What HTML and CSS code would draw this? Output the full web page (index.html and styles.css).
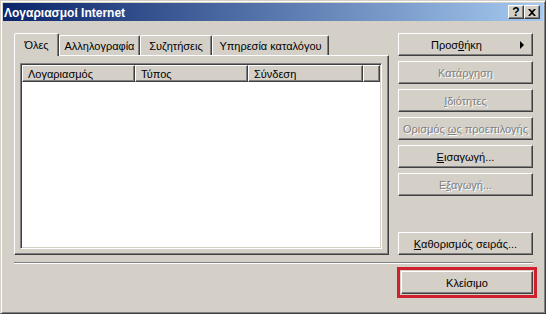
FILE: index.html
```html
<!DOCTYPE html>
<html lang="el">
<head>
<meta charset="utf-8">
<title>Λογαριασμοί Internet</title>
<link rel="stylesheet" href="styles.css">
</head>
<body>
<div class="window">
  <div class="titlebar">
    <span class="title">Λογαριασμοί Internet</span>
    <div class="caption-buttons">
      <div class="cap cap-help">?</div>
      <div class="cap cap-close">
        <svg width="8" height="7" viewBox="0 0 8 7"><path d="M0 0h2l2 2 2-2h2L5 3.5 8 7H6L4 5 2 7H0l3-3.5z" fill="#000"/></svg>
      </div>
    </div>
  </div>
  <div class="content">
    <div class="main">
      <div class="tabctl">
        <div class="tabrow">
          <div class="tab active tab-all">Όλες</div>
          <div class="tab tab-mail">Αλληλογραφία</div>
          <div class="tab tab-news">Συζητήσεις</div>
          <div class="tab tab-dir">Υπηρεσία καταλόγου</div>
        </div>
        <div class="panel">
          <div class="listview">
            <div class="lv-header">
              <div class="col col-account">Λογαριασμός</div>
              <div class="col col-type">Τύπος</div>
              <div class="col col-conn">Σύνδεση</div>
              <div class="col col-fill"></div>
            </div>
          </div>
        </div>
      </div>
      <div class="side">
        <button class="btn btn-add">Προσ<u>θ</u>ήκη<span class="arrow"></span></button>
        <button class="btn disabled">Κατάρ<u>γ</u>ηση</button>
        <button class="btn disabled"><u>Ι</u>διότητες</button>
        <button class="btn disabled">Ορισμός <u>ω</u>ς προεπιλογής</button>
        <button class="btn"><u>Ε</u>ισαγωγή...</button>
        <button class="btn disabled">Ε<u>ξ</u>αγωγή...</button>
        <button class="btn btn-order"><u>Κ</u>αθορισμός σειράς...</button>
      </div>
    </div>
    <div class="separator"></div>
    <div class="footer">
      <button class="btn btn-close">Κλείσιμο</button>
    </div>
  </div>
</div>
</body>
</html>
```
FILE: styles.css
```css
* { box-sizing: border-box; }
html, body { margin: 0; padding: 0; }
body {
  width: 546px;
  height: 314px;
  overflow: hidden;
  background: #d4d0c8;
  font-family: "Liberation Sans", Arial, sans-serif;
  font-size: 11px;
  color: #000;
}
.window {
  width: 546px;
  height: 314px;
  border: 1px solid;
  border-color: #d4d0c8 #404040 #404040 #d4d0c8;
  box-shadow: inset 1px 1px #fff, inset -1px -1px #808080;
  padding: 2px;
  display: flex;
  flex-direction: column;
  background: #d4d0c8;
}
.titlebar {
  height: 18px;
  flex: none;
  display: flex;
  align-items: center;
  justify-content: space-between;
  padding: 0 3px 0 1px;
  background: linear-gradient(to right, #0a246a, #a6caf0);
}
.title {
  color: #fff;
  font-weight: bold;
  font-size: 12px;
  padding-top: 1px;
}
.caption-buttons { display: flex; }
.cap {
  width: 16px;
  height: 14px;
  background: #d4d0c8;
  border: 1px solid;
  border-color: #fff #404040 #404040 #fff;
  box-shadow: inset -1px -1px #808080;
  display: flex;
  align-items: center;
  justify-content: center;
}
.cap-help {
  font-weight: bold;
  font-size: 12px;
  line-height: 1;
  padding-bottom: 1px;
}
.cap-close svg { display: block; margin-left: -1px; }

.content {
  flex: 1;
  display: flex;
  flex-direction: column;
  padding: 12px 10px 0 11px;
}
.main {
  display: flex;
  height: 222px;
  gap: 9px;
}
.tabctl {
  width: 375px;
  display: flex;
  flex-direction: column;
}
.tabrow {
  height: 22px;
  display: flex;
  align-items: flex-end;
}
.tab {
  height: 20px;
  border: 1px solid;
  border-bottom: none;
  border-color: #fff #404040 transparent #fff;
  border-radius: 2px 2px 0 0;
  box-shadow: inset -1px 0 #808080;
  background: #d4d0c8;
  display: flex;
  align-items: center;
  justify-content: center;
  padding-top: 1px;
  white-space: nowrap;
}
.tab.active {
  height: 23px;
  margin-bottom: -1px;
  position: relative;
  z-index: 1;
  padding-top: 0;
  padding-bottom: 1px;
}
.tab-all { width: 45px; }
.tab-mail { width: 81px; }
.tab-news { width: 72px; }
.tab-dir { width: 117px; }

.panel {
  flex: 1;
  display: flex;
  border: 1px solid;
  border-color: #fff #404040 #404040 #fff;
  box-shadow: inset -1px -1px #808080;
  padding: 7px 6px 5px 5px;
}
.listview {
  flex: 1;
  background: #fff;
  border: 1px solid;
  border-color: #808080 #fff #fff #808080;
  box-shadow: inset 1px 1px #404040, inset -1px -1px #d4d0c8;
  padding: 1px;
}
.lv-header {
  display: flex;
  height: 17px;
}
.col {
  background: #d4d0c8;
  border: 1px solid;
  border-color: #fff #404040 #404040 #fff;
  box-shadow: inset -1px -1px #808080;
  padding-left: 5px;
  display: flex;
  align-items: center;
  white-space: nowrap;
}
.col-account { width: 113px; }
.col-type { width: 113px; }
.col-conn { width: 115px; }
.col-fill { flex: 1; }

.side {
  width: 135px;
  display: flex;
  flex-direction: column;
  gap: 5px;
}
.btn {
  height: 23px;
  flex: none;
  background: #d4d0c8;
  border: 1px solid;
  border-color: #fff #404040 #404040 #fff;
  box-shadow: inset -1px -1px #808080;
  font-family: "Liberation Sans", Arial, sans-serif;
  font-size: 11px;
  color: #000;
  padding: 0;
  text-align: center;
  white-space: nowrap;
}
.btn u { text-underline-offset: 1px; }
.btn.disabled {
  color: #808080;
  text-shadow: 1px 1px 0 #fff;
}
.btn-add {
  position: relative;
  padding-right: 18px;
}
.arrow {
  position: absolute;
  right: 8px;
  top: 7px;
  width: 0;
  height: 0;
  border-top: 4px solid transparent;
  border-bottom: 4px solid transparent;
  border-left: 4px solid #000;
}
.btn-order { margin-top: auto; }

.separator {
  margin-top: 7px;
  height: 2px;
  border-top: 1px solid #808080;
  border-bottom: 1px solid #fff;
}
.footer {
  display: flex;
  justify-content: flex-end;
  margin-top: 7px;
}
.btn-close {
  width: 132px;
  outline: 3px solid #d0202e;
  outline-offset: 1px;
}
```
